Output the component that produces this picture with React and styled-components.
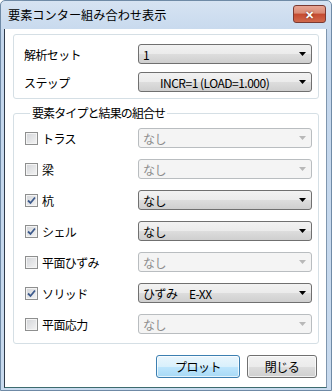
import styled, { createGlobalStyle } from "styled-components";

const rows = [
  { name: "トラス", checked: false, value: "なし" },
  { name: "梁", checked: false, value: "なし" },
  { name: "杭", checked: true, value: "なし" },
  { name: "シェル", checked: true, value: "なし" },
  { name: "平面ひずみ", checked: false, value: "なし" },
  { name: "ソリッド", checked: true, value: "ひずみ　E-XX" },
  { name: "平面応力", checked: false, value: "なし" },
];

function Arrow({ disabled }) {
  return (
    <ArrowBox viewBox="0 0 7 4" $disabled={disabled}>
      <path d="M0 0H7L3.5 4Z" />
    </ArrowBox>
  );
}

function Combo({ value, disabled, indent }) {
  return (
    <ComboBox $disabled={disabled} $indent={indent}>
      <span>{value}</span>
      <Arrow disabled={disabled} />
    </ComboBox>
  );
}

function Check({ checked }) {
  return (
    <CheckBox>
      {checked && (
        <svg width="9" height="9" viewBox="0 0 9 9">
          <path d="M1 4.5L3.5 7L8 1.5" fill="none" stroke="#3d5a8c" strokeWidth="1.8" />
        </svg>
      )}
    </CheckBox>
  );
}

function App() {
  return (
    <>
      <GlobalStyle />
      <Window>
        <TitleBar>
          <Title>要素コンター組み合わせ表示</Title>
          <CloseButton>✕</CloseButton>
        </TitleBar>
        <Client>
          <TopGroup>
            <FormRow>
              <Label>解析セット</Label>
              <Combo value="1" />
            </FormRow>
            <FormRow>
              <Label>ステップ</Label>
              <Combo value="INCR=1 (LOAD=1.000)" indent />
            </FormRow>
          </TopGroup>
          <Group>
            <Legend>要素タイプと結果の組合せ</Legend>
            <RowList>
              {rows.map((r) => (
                <TypeRow key={r.name}>
                  <CheckLabel>
                    <Check checked={r.checked} />
                    <span>{r.name}</span>
                  </CheckLabel>
                  <Combo value={r.value} disabled={!r.checked} />
                </TypeRow>
              ))}
            </RowList>
          </Group>
          <ButtonBar>
            <Button $primary $w={84}>プロット</Button>
            <Button $w={70}>閉じる</Button>
          </ButtonBar>
        </Client>
      </Window>
    </>
  );
}

//--styles--
const GlobalStyle = createGlobalStyle`
  body {
    margin: 0;
    font-family: "Noto Sans CJK JP", "Liberation Sans", sans-serif;
    font-size: 12px;
    color: #000;
  }
`;

const Window = styled.div`
  width: 332px;
  height: 391px;
  box-sizing: border-box;
  display: flex;
  flex-direction: column;
  background: linear-gradient(#d6e3f2, #c3d6ec 40px, #c8daee);
  border: 1px solid #6f8aa6;
  border-radius: 5px 5px 0 0;
`;

const TitleBar = styled.div`
  height: 28px;
  display: flex;
  align-items: center;
  justify-content: space-between;
  padding: 0 5px 0 7px;
`;

const Title = styled.div`
  font-size: 12.2px;
`;

const CloseButton = styled.div`
  width: 33px;
  height: 18px;
  box-sizing: border-box;
  margin-top: -2px;
  border: 1px solid #7a3a32;
  border-radius: 3px;
  background: linear-gradient(#e8a594 0%, #d98a74 45%, #c4492f 50%, #d1694c 100%);
  color: #fff;
  font-size: 11px;
  font-weight: bold;
  display: flex;
  align-items: center;
  justify-content: center;
  text-shadow: 0 0 2px #5a1a10;
`;

const Client = styled.div`
  flex: 1;
  margin: 0 4px 2px 3px;
  background: #fff;
  border-left: 1px solid #2f3b4a;
  border-right: 1px solid #7f96ae;
  border-bottom: 1px solid #3c6b6e;
  padding: 5px 7px 0 8px;
  display: flex;
  flex-direction: column;
`;

const TopGroup = styled.div`
  height: 65px;
  box-sizing: border-box;
  border: 1px solid #d5dfe5;
  border-radius: 3px;
  padding: 9px 6px 0 10px;
  display: flex;
  flex-direction: column;
  gap: 8px;
`;

const FormRow = styled.div`
  display: flex;
  align-items: center;
  justify-content: space-between;
`;

const Label = styled.span`
  letter-spacing: -0.6px;
`;

const ComboBox = styled.div`
  width: 174px;
  height: 20px;
  box-sizing: border-box;
  border: 1px solid ${(p) => (p.$disabled ? "#b9bdc0" : "#707070")};
  border-radius: 3px;
  background: ${(p) =>
    p.$disabled
      ? "#f4f4f4"
      : "linear-gradient(#f2f2f2 0%, #ebebeb 50%, #dddddd 51%, #cfcfcf 100%)"};
  color: ${(p) => (p.$disabled ? "#8d8d8d" : "#000")};
  display: flex;
  align-items: center;
  justify-content: space-between;
  padding: 0 5px 0 ${(p) => (p.$indent ? "21px" : "4px")};
  font-size: 12px;
  letter-spacing: -0.5px;
  white-space: pre;
`;

const ArrowBox = styled.svg`
  width: 7px;
  height: 4px;
  fill: ${(p) => (p.$disabled ? "#b8b8b8" : "#000")};
`;

const Group = styled.fieldset`
  margin: 7px 0 0;
  padding: 8px 6px 0 11px;
  height: 238px;
  box-sizing: border-box;
  border: 1px solid #d5dfe5;
  border-radius: 3px;
  min-width: 0;
`;

const Legend = styled.legend`
  padding: 0 2px;
  margin-left: 5px;
  line-height: 14px;
  letter-spacing: -0.9px;
`;

const RowList = styled.div`
  display: flex;
  flex-direction: column;
  gap: 11px;
`;

const TypeRow = styled.div`
  display: flex;
  align-items: center;
  justify-content: space-between;
`;

const CheckLabel = styled.label`
  display: flex;
  align-items: center;
  gap: 4px;
  letter-spacing: -0.6px;
`;

const CheckBox = styled.span`
  width: 13px;
  height: 13px;
  box-sizing: border-box;
  border: 1px solid #8e8f8f;
  background: linear-gradient(135deg, #d2d4d8, #f4f4f4);
  box-shadow: inset 0 0 0 1px #f4f4f4;
  display: flex;
  align-items: center;
  justify-content: center;
`;

const ButtonBar = styled.div`
  display: flex;
  justify-content: flex-end;
  gap: 7px;
  margin-top: 11px;
  padding-right: 2px;
`;

const Button = styled.div`
  width: ${(p) => p.$w}px;
  height: 23px;
  box-sizing: border-box;
  border: 1px solid ${(p) => (p.$primary ? "#3c7fb1" : "#707070")};
  border-radius: 3px;
  background: ${(p) =>
    p.$primary
      ? "linear-gradient(#eaf6fd 0%, #d9f0fc 50%, #bee6fd 51%, #a7d9f5 100%)"
      : "linear-gradient(#f2f2f2 0%, #ebebeb 50%, #dddddd 51%, #cfcfcf 100%)"};
  box-shadow: inset 0 0 0 1px rgba(255, 255, 255, 0.7);
  display: flex;
  align-items: center;
  justify-content: center;
  letter-spacing: -0.5px;
`;

export default App;
